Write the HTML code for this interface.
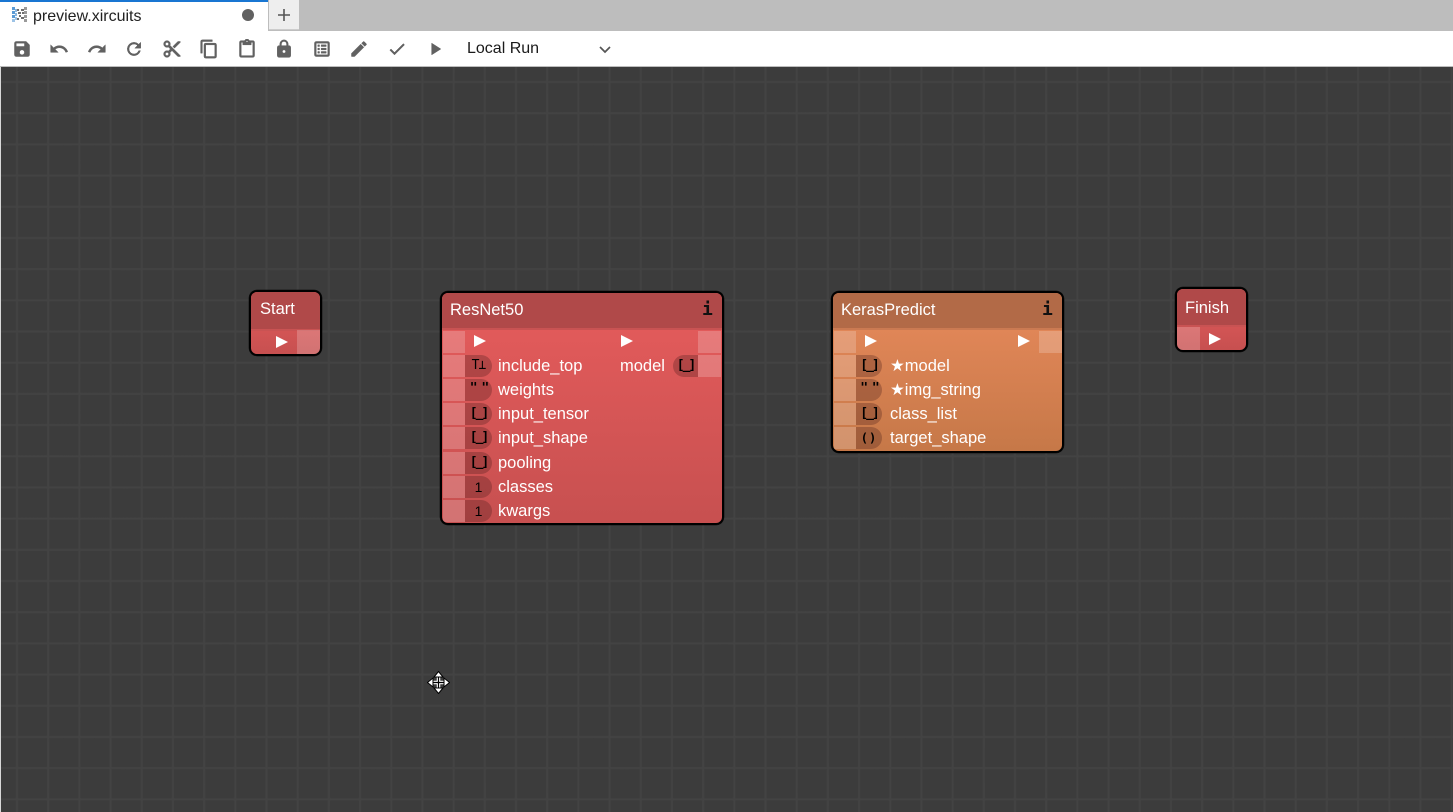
<!DOCTYPE html>
<html>
<head>
<meta charset="utf-8">
<title>preview.xircuits</title>
<style>
html,body{margin:0;padding:0;width:1453px;height:812px;overflow:hidden;background:#fff;font-family:"Liberation Sans",Arial,sans-serif}
.abs{position:absolute}
#tabbar{left:0;top:0;width:1453px;height:31px;background:#bdbdbd}
#tab{left:0;top:0;width:268px;height:31px;background:#fff;border-top:2px solid #1976d2;box-sizing:border-box}
#plus{left:269px;top:0;width:30px;height:30px;background:#eee;border-bottom:1px solid #ccc;box-sizing:border-box}
#toolbar{left:0;top:31px;width:1453px;height:35px;background:#fff}
#canvas{left:1px;top:67px;width:1452px;height:745px;background-color:#3c3c3c;
background-image:linear-gradient(90deg,transparent 14.500px,#434343 15.500px,#434343 16.500px,transparent 17.500px),linear-gradient(180deg,transparent 13.500px,#434343 14.500px,#434343 15.500px,transparent 16.500px);
background-size:31.200px 31.200px;}
#topline{left:0;top:66px;width:1453px;height:1px;background:#bdbdbd}
#leftline{left:0;top:67px;width:1px;height:745px;background:#d8d8d8}
.tico{position:absolute;top:39px;width:20px;height:20px;fill:#616161;stroke:#616161;stroke-width:.6}
.node{position:absolute;box-sizing:border-box;border:2px solid #000;border-radius:8px;overflow:hidden;color:#fff;font-size:16.500px;box-shadow:0 0 0 .25px #000}
.hd{position:absolute;left:0;right:0;top:0;font-size:16.500px;line-height:34px;padding-left:8px}
.port{position:absolute;width:22px;height:22px}
.pill{position:absolute;width:27px;height:22px;background:rgba(60,20,20,.28);border-radius:0 11px 11px 0;color:#000;font-family:"DejaVu Sans Mono","Liberation Mono",monospace;font-size:13px;font-weight:bold;letter-spacing:-2px;line-height:22px;text-align:center}
.one{font-family:"Liberation Sans",sans-serif;font-size:14px;font-weight:normal;letter-spacing:0}
.qt{letter-spacing:-2px;line-height:20px;font-size:13px}
.pillr{border-radius:11px 0 0 11px;width:25px}
.lbl{position:absolute;line-height:22px;white-space:nowrap}
.tri{position:absolute;width:0;height:0;border-left:12px solid #fff;border-top:6.500px solid transparent;border-bottom:6.500px solid transparent}
.info{position:absolute;font-family:"DejaVu Sans Mono",monospace;font-size:18px;font-weight:bold;color:#111;line-height:34px}
.red{background:linear-gradient(180deg,#e65c5c 0%,#c75050 100%)}
.redh{background:#b04949;border-bottom:2px solid #c95353;box-sizing:border-box}
.org{background:linear-gradient(180deg,#e88a5c 0%,#c67848 100%)}
.orgh{background:#b26a47;border-bottom:2px solid #cb7a52;box-sizing:border-box}
.pw{background:rgba(255,255,255,.2)}
</style>
</head>
<body>
<div id="tabbar" class="abs"></div>
<div id="tab" class="abs"></div>
<div id="plus" class="abs"></div>
<svg class="abs" style="left:276px;top:7px" width="16" height="16" viewBox="0 0 16 16"><path d="M8 2v12M2 8h12" stroke="#555" stroke-width="1.600" fill="none"/></svg>

<svg class="abs" style="left:12px;top:7px" width="16" height="16" viewBox="0 0 16 16">
<g fill="#5b9bd5"><rect x="0" y="0" width="3" height="3"/><rect x="0" y="4" width="3" height="3"/><rect x="0" y="8" width="3" height="3"/><rect x="0" y="12" width="3" height="3" opacity=".6"/><rect x="3" y="2" width="2" height="3" opacity=".7"/><rect x="3" y="6" width="2" height="3" opacity=".7"/><rect x="3" y="10" width="2" height="3" opacity=".6"/></g>
<g fill="#6f6f6f"><rect x="5" y="2" width="2" height="2"/><rect x="6" y="5" width="3" height="2"/><rect x="7" y="8" width="2" height="2"/><rect x="5" y="11" width="2" height="2"/><rect x="10" y="5" width="2" height="2"/><rect x="9" y="2" width="3" height="2"/><rect x="9" y="10" width="3" height="2"/></g>
<g fill="#9a9a9a"><rect x="12" y="0" width="3" height="3"/><rect x="12" y="4" width="3" height="3"/><rect x="12" y="8" width="3" height="3"/><rect x="12" y="12" width="3" height="3"/></g></svg>
<div class="abs" style="left:33px;top:7px;font-size:16px;line-height:19px;color:#222">preview.xircuits</div>
<div class="abs" style="left:242px;top:9px;width:12px;height:12px;border-radius:50%;background:#616161"></div>

<div id="toolbar" class="abs"></div>
<svg class="tico" style="left:12px" viewBox="0 0 24 24"><path d="M17 3H5a2 2 0 0 0-2 2v14a2 2 0 0 0 2 2h14a2 2 0 0 0 2-2V7l-4-4zm-5 16a3 3 0 1 1 0-6 3 3 0 0 1 0 6zm3-10H5V5h10v4z"/></svg>
<svg class="tico" style="left:49px" viewBox="0 0 24 24"><path d="M12.500 8c-2.650 0-5.050 1-6.900 2.600L2 7v9h9l-3.620-3.620c1.390-1.160 3.160-1.880 5.120-1.880 3.540 0 6.550 2.310 7.600 5.500l2.370-.78C21.080 11.030 17.150 8 12.500 8z"/></svg>
<svg class="tico" style="left:87px" viewBox="0 0 24 24"><path d="M18.400 10.600C16.550 9 14.150 8 11.500 8c-4.650 0-8.580 3.030-9.960 7.220L3.900 16c1.050-3.190 4.050-5.500 7.600-5.500 1.950 0 3.730.72 5.120 1.880L13 16h9V7l-3.600 3.600z"/></svg>
<svg class="tico" style="left:124px" viewBox="0 0 24 24"><path d="M17.650 6.350A7.960 7.960 0 0 0 12 4a8 8 0 1 0 7.730 10h-2.080A6 6 0 1 1 12 6c1.660 0 3.140.69 4.220 1.780L13 11h7V4l-2.350 2.350z"/></svg>
<svg class="tico" style="left:162px" viewBox="0 0 24 24"><path d="M9.640 7.640c.23-.5.36-1.050.36-1.640 0-2.210-1.790-4-4-4S2 3.790 2 6s1.790 4 4 4c.59 0 1.140-.13 1.640-.36L10 12l-2.360 2.360C7.140 14.130 6.590 14 6 14c-2.210 0-4 1.790-4 4s1.790 4 4 4 4-1.790 4-4c0-.59-.13-1.140-.36-1.640L12 14l7 7h3v-1L9.640 7.640zM6 8a2 2 0 1 1 0-4 2 2 0 0 1 0 4zm0 12a2 2 0 1 1 0-4 2 2 0 0 1 0 4zM19 3l-6 6 2 2 7-7V3h-3z"/></svg>
<svg class="tico" style="left:199px" viewBox="0 0 24 24"><path d="M16 1H4a2 2 0 0 0-2 2v14h2V3h12V1zm3 4H8a2 2 0 0 0-2 2v14a2 2 0 0 0 2 2h11a2 2 0 0 0 2-2V7a2 2 0 0 0-2-2zm0 16H8V7h11v14z"/></svg>
<svg class="tico" style="left:237px" viewBox="0 0 24 24"><path d="M19 2h-4.180C14.400.84 13.300 0 12 0s-2.400.84-2.820 2H5a2 2 0 0 0-2 2v16a2 2 0 0 0 2 2h14a2 2 0 0 0 2-2V4a2 2 0 0 0-2-2zm-7 0a1 1 0 1 1 0 2 1 1 0 0 1 0-2zm7 18H5V4h2v3h10V4h2v16z"/></svg>
<svg class="tico" style="left:274px" viewBox="0 0 24 24"><path d="M18 8h-1V6A5 5 0 0 0 7 6v2H6a2 2 0 0 0-2 2v10a2 2 0 0 0 2 2h12a2 2 0 0 0 2-2V10a2 2 0 0 0-2-2zm-6 9a2 2 0 1 1 0-4 2 2 0 0 1 0 4zm3.100-9H8.900V6a3.100 3.100 0 0 1 6.200 0v2z"/></svg>
<svg class="tico" style="left:312px" viewBox="0 0 24 24"><path d="M19 3H5a2 2 0 0 0-2 2v14a2 2 0 0 0 2 2h14a2 2 0 0 0 2-2V5a2 2 0 0 0-2-2zm0 16H5V5h14v14zM7 7h2v2H7V7zm4 0h6v2h-6V7zm-4 4h2v2H7v-2zm4 0h6v2h-6v-2zm-4 4h2v2H7v-2zm4 0h6v2h-6v-2z"/></svg>
<svg class="tico" style="left:349px" viewBox="0 0 24 24"><path d="M3 17.250V21h3.750L17.810 9.940l-3.750-3.750L3 17.250zM20.710 7.040a1 1 0 0 0 0-1.410l-2.340-2.340a1 1 0 0 0-1.410 0l-1.830 1.830 3.750 3.750 1.830-1.830z"/></svg>
<svg class="tico" style="left:387px" viewBox="0 0 24 24"><path d="M9 16.170 4.830 12l-1.420 1.410L9 19 21 7l-1.410-1.410z"/></svg>
<svg class="tico" style="left:425px" viewBox="0 0 24 24"><path d="M8 5v14l11-7z"/></svg>
<div class="abs" style="left:467px;top:39px;font-size:16px;line-height:19px;color:#1a1a1a">Local Run</div>
<svg class="abs" style="left:598px;top:45px" width="14" height="10" viewBox="0 0 14 10"><path d="M2 2l5 5 5-5" fill="none" stroke="#555" stroke-width="1.700"/></svg>

<div id="topline" class="abs"></div>
<div id="canvas" class="abs"></div>
<div id="leftline" class="abs"></div>

<!-- Start -->
<div class="node red" style="left:249px;top:290px;width:73px;height:66px">
  <div class="hd redh" style="height:39px;line-height:35px;padding-left:9px">Start</div>
  <div class="tri" style="left:25px;top:44px"></div>
  <div class="port pw" style="left:46px;top:38px;width:23px;height:24px"></div>
</div>

<!-- ResNet50 -->
<div class="node red" style="left:440px;top:291px;width:284px;height:234px">
  <div class="hd redh" style="height:37px">ResNet50</div>
  <div class="info" style="left:260px;top:0">i</div>

  <div class="port pw" style="left:1px;top:38px"></div>
  <div class="tri" style="left:32px;top:42px"></div>
  <div class="tri" style="left:179px;top:42px"></div>
  <div class="port pw" style="left:256px;top:38px;width:23px"></div>

  <div class="port pw" style="left:1px;top:62px"></div>
  <div class="pill" style="left:23px;top:62px;letter-spacing:-1px;font-weight:normal;font-size:13px">T⊥</div>
  <div class="lbl" style="left:56px;top:62px">include_top</div>
  <div class="lbl" style="left:178px;top:62px">model</div>
  <div class="pill pillr" style="left:231px;top:62px">[_]</div>
  <div class="port pw" style="left:256px;top:62px;width:23px"></div>

  <div class="port pw" style="left:1px;top:86px"></div>
  <div class="pill qt" style="left:23px;top:86px">" "</div>
  <div class="lbl" style="left:56px;top:86px">weights</div>

  <div class="port pw" style="left:1px;top:110px"></div>
  <div class="pill" style="left:23px;top:110px">[_]</div>
  <div class="lbl" style="left:56px;top:110px">input_tensor</div>

  <div class="port pw" style="left:1px;top:134px"></div>
  <div class="pill" style="left:23px;top:134px">[_]</div>
  <div class="lbl" style="left:56px;top:134px">input_shape</div>

  <div class="port pw" style="left:1px;top:159px"></div>
  <div class="pill" style="left:23px;top:159px">[_]</div>
  <div class="lbl" style="left:56px;top:159px">pooling</div>

  <div class="port pw" style="left:1px;top:183px"></div>
  <div class="pill one" style="left:23px;top:183px">1</div>
  <div class="lbl" style="left:56px;top:183px">classes</div>

  <div class="port pw" style="left:1px;top:207px"></div>
  <div class="pill one" style="left:23px;top:207px">1</div>
  <div class="lbl" style="left:56px;top:207px">kwargs</div>
</div>

<!-- KerasPredict -->
<div class="node org" style="left:831px;top:291px;width:233px;height:162px">
  <div class="hd orgh" style="height:37px">KerasPredict</div>
  <div class="info" style="left:209px;top:0">i</div>

  <div class="port pw" style="left:1px;top:38px"></div>
  <div class="tri" style="left:32px;top:42px"></div>
  <div class="tri" style="left:185px;top:42px"></div>
  <div class="port pw" style="left:206px;top:38px;width:23px"></div>

  <div class="port pw" style="left:1px;top:62px"></div>
  <div class="pill" style="left:23px;top:62px;width:26px">[_]</div>
  <div class="lbl" style="left:57px;top:62px">★model</div>

  <div class="port pw" style="left:1px;top:86px"></div>
  <div class="pill qt" style="left:23px;top:86px;width:26px">" "</div>
  <div class="lbl" style="left:57px;top:86px">★img_string</div>

  <div class="port pw" style="left:1px;top:110px"></div>
  <div class="pill" style="left:23px;top:110px;width:26px">[_]</div>
  <div class="lbl" style="left:57px;top:110px">class_list</div>

  <div class="port pw" style="left:1px;top:134px"></div>
  <div class="pill" style="left:23px;top:134px;width:26px;letter-spacing:1px;font-weight:bold;font-size:12px">()</div>
  <div class="lbl" style="left:57px;top:134px">target_shape</div>
</div>

<!-- Finish -->
<div class="node red" style="left:1175px;top:287px;width:73px;height:65px">
  <div class="hd redh" style="height:38px;line-height:38px">Finish</div>
  <div class="port pw" style="left:0;top:38px;width:23px;height:23px"></div>
  <div class="tri" style="left:32px;top:44px"></div>
</div>

<!-- Move cursor -->
<svg class="abs" style="left:427px;top:671px" width="23" height="23" viewBox="0 0 23 23">
<path d="M11.500 4v15M4 11.500h15" stroke="#fff" stroke-width="3.500" fill="none"/>
<path d="M11.500 4v15M4 11.500h15" stroke="#000" stroke-width="1.200" fill="none"/>
<path d="M11.500 .5l4.500 5.500h-9zM11.500 22.500l4.500-5.500h-9zM.5 11.500l5.500-4.500v9zM22.500 11.500l-5.500-4.500v9z" fill="#fff" stroke="#000" stroke-width="1"/>
</svg>
</body>
</html>
